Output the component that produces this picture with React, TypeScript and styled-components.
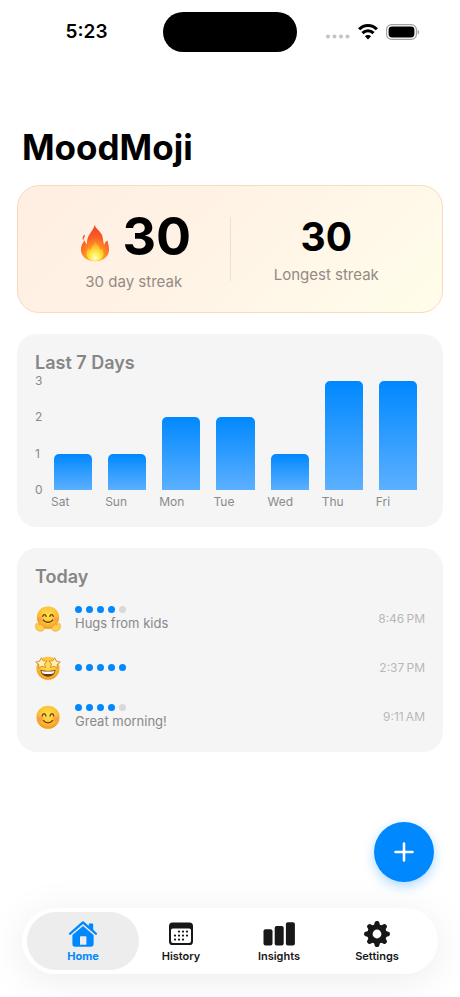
import React from "react";
import styled, { createGlobalStyle } from "styled-components";

const GlobalStyle = createGlobalStyle`
  *, *::before, *::after { box-sizing: border-box; }
  body {
    margin: 0;
    background: #fff;
    color: #000;
    font-family: Inter, "Liberation Sans", sans-serif;
  }
  h1, h2, p, ul { margin: 0; padding: 0; }
  ul { list-style: none; }
`;

const Screen = styled.div`
  min-height: 100vh;
  display: flex;
  flex-direction: column;
  overflow: hidden;
`;

const StatusBar = styled.header`
  display: grid;
  grid-template-columns: 1fr 134px 1fr;
  align-items: center;
  padding-top: 12px;
`;

const Clock = styled.time`
  padding-left: 10px;
  text-align: center;
  font-size: 19px;
  line-height: 24px;
  font-weight: 600;
`;

const Island = styled.div`
  height: 40px;
  border-radius: 20px;
  background: #000;
`;

const StatusIcons = styled.div`
  display: flex;
  align-items: center;
  gap: 8px;
  padding-left: 29px;
`;

const Title = styled.h1`
  padding: 73px 22px 16px;
  font-size: 35px;
  line-height: 44px;
  font-weight: 700;
`;

const Main = styled.main`
  flex: 1;
  display: flex;
  flex-direction: column;
  gap: 21px;
  padding: 0 17px;
`;

const StreakCard = styled.section`
  display: grid;
  grid-template-columns: 1fr 1px 1fr;
  align-items: center;
  min-height: 128px;
  padding: 0 20px;
  border: 1px solid #fbd9bd;
  border-radius: 22px;
  background: linear-gradient(135deg, #ffeee2 0%, #fff3e6 45%, #fffdea 100%);
`;

const Divider = styled.div`
  height: 64px;
  background: #ecdfd3;
`;

const Stat = styled.div`
  display: flex;
  flex-direction: column;
  align-items: center;
  gap: 4px;
`;

const StatValue = styled.div<{ $large?: boolean }>`
  display: flex;
  align-items: flex-end;
  gap: 12px;
  padding-left: ${(p) => (p.$large ? 4 : 0)}px;
  font-size: ${(p) => (p.$large ? 52 : 39)}px;
  line-height: ${(p) => (p.$large ? 62 : 48)}px;
  font-weight: 700;

  svg { margin-bottom: 6px; }
`;

const StatLabel = styled.p`
  font-size: 15px;
  line-height: 20px;
  color: #928a85;
`;

const Card = styled.section`
  padding: 18px 18px 11px;
  border-radius: 20px;
  background: #f5f5f5;
`;

const CardTitle = styled.h2`
  font-size: 18px;
  line-height: 22px;
  font-weight: 600;
  color: #868686;
`;

const Chart = styled.div`
  display: grid;
  grid-template-columns: 11px 1fr;
  margin-top: 7px;
`;

const Axis = styled.div`
  display: flex;
  flex-direction: column;
  justify-content: space-between;
  margin: -7px 0;
  font-size: 12px;
  line-height: 14px;
  color: #8a8a8a;
`;

const Plot = styled.div`
  display: grid;
  grid-template-columns: repeat(7, 1fr);
  align-items: end;
  height: 109px;
`;

const Bar = styled.div`
  margin: 0 8px;
  border-radius: 5px 5px 0 0;
  background: linear-gradient(#0088ff, #5cb0ff);
`;

const DayLabels = styled.div`
  grid-column: 2;
  display: grid;
  grid-template-columns: repeat(7, 1fr);
  padding: 4px 0 6px;
  font-size: 12px;
  line-height: 16px;
  color: #8a8a8a;

  span { padding-left: 5px; }
`;

const Entry = styled.li`
  display: flex;
  align-items: center;
  gap: 14px;
  min-height: 49px;
`;

const EntryList = styled.ul`
  display: flex;
  flex-direction: column;
  margin-top: 6px;
`;

const EntryBody = styled.div`
  flex: 1;
  display: flex;
  flex-direction: column;
  gap: 2px;
`;

const Dots = styled.div`
  display: flex;
  gap: 4px;
`;

const Dot = styled.span<{ $on: boolean }>`
  width: 7px;
  height: 7px;
  border-radius: 50%;
  background: ${(p) => (p.$on ? "#0088ff" : "#d8d8d8")};
`;

const Note = styled.p`
  font-size: 13px;
  line-height: 16px;
  color: #888;
`;

const EntryTime = styled.time`
  font-size: 12px;
  line-height: 16px;
  color: #b8b8b8;
`;

const Footer = styled.footer`
  display: flex;
  flex-direction: column;
  gap: 26px;
  padding: 0 22px 23px;
`;

const AddButton = styled.button`
  align-self: flex-end;
  display: grid;
  place-items: center;
  width: 60px;
  height: 60px;
  margin-right: 4px;
  padding: 0;
  border: 0;
  border-radius: 50%;
  background: #0088ff;
  box-shadow: 0 4px 12px rgba(0, 136, 255, 0.32);
  cursor: pointer;
`;

const TabBar = styled.nav`
  display: grid;
  grid-template-columns: repeat(4, 1fr);
  padding: 4px 12px;
  border-radius: 33px;
  background: #fff;
  box-shadow: 0 6px 40px rgba(0, 0, 0, 0.08);
`;

const Tab = styled.a<{ $active?: boolean }>`
  display: flex;
  flex-direction: column;
  align-items: center;
  gap: 1px;
  height: 58px;
  margin: 0 -7px;
  padding-top: 8px;
  border-radius: 29px;
  background: ${(p) => (p.$active ? "#ededed" : "transparent")};
  color: ${(p) => (p.$active ? "#0088ff" : "#171717")};
  font-size: 11px;
  line-height: 14px;
  font-weight: ${(p) => (p.$active ? 700 : 600)};
  text-decoration: none;
`;

const SignalIcon = () => (
  <svg width="24" height="20" viewBox="0 0 24 20" fill="#c3c3c5" aria-hidden="true">
    <circle cx="2" cy="14.5" r="2" />
    <circle cx="8.5" cy="14.5" r="2" />
    <circle cx="15" cy="14.5" r="2" />
    <circle cx="21.5" cy="14.5" r="2" />
  </svg>
);

const WifiIcon = () => (
  <svg width="20" height="18" viewBox="0 0 20 18" aria-hidden="true">
    <g fill="none" stroke="#000" strokeWidth="3">
      <path d="M1.1 6.3C6 1.1 14 1.1 18.9 6.3" />
      <path d="M4.5 10.1C7.6 6.8 12.4 6.8 15.5 10.1" />
    </g>
    <path d="M10 16.4 6.9 13.2C8.5 11.5 11.5 11.5 13.1 13.2Z" />
  </svg>
);

const BatteryIcon = () => (
  <svg width="34" height="16" viewBox="0 0 34 16" aria-hidden="true">
    <rect x=".6" y=".6" width="29.8" height="14.8" rx="5" fill="none" stroke="#a2a2a4" strokeWidth="1.2" />
    <rect x="2.6" y="2.6" width="25.8" height="10.8" rx="3.4" />
    <path d="M31.6 5.4C33.6 6.2 33.6 9.8 31.6 10.6Z" fill="#a2a2a4" />
  </svg>
);

const FlameIcon = () => (
  <svg width="30" height="38" viewBox="0 0 30 38" aria-hidden="true">
    <defs>
      <radialGradient id="flameOuter" cx=".5" cy=".92" r=".85">
        <stop offset="0" stopColor="#ffd52e" />
        <stop offset=".38" stopColor="#ff9a1f" />
        <stop offset=".72" stopColor="#fb5a27" />
        <stop offset="1" stopColor="#f0492a" />
      </radialGradient>
      <radialGradient id="flameInner" cx=".5" cy=".85" r=".75">
        <stop offset="0" stopColor="#fffbd0" />
        <stop offset=".4" stopColor="#ffec45" />
        <stop offset="1" stopColor="#ff9f22" />
      </radialGradient>
    </defs>
    <path
      fill="url(#flameOuter)"
      d="M14.6 1C14.2 5 9.2 9.5 7.6 14.3C7 16.2 6.9 18.2 6.8 20.3C5.6 19.2 5 17.5 4.8 16.2C2.2 19 1 22.2 1 25.4C1 32.2 6.5 37.2 15 37.2C23.6 37.2 29 32.2 29 25.2C29 21.5 27.8 19.6 27.6 16.5C25.7 17.3 24.6 18.8 24.3 20.8C23 18.4 23.2 15.3 22.4 12.3C21.2 7.5 16.2 5.6 14.6 1Z"
    />
    <path fill="#f5502b" d="M5 10.4C2.3 12 2 14 3.2 16.5C3.3 14 5.2 13 5 10.4Z" />
    <path
      fill="url(#flameInner)"
      d="M15.2 17C14.7 20.5 11.4 22 10.8 26.5C9.9 26 9.3 25.2 9.1 24C7.5 25.6 6.6 27.8 6.6 30C6.6 34 10 36.8 15 36.8C20 36.8 23.5 34 23.5 29.8C23.5 27.6 22.9 26 22.2 24.4C21.4 25 20.8 25.6 20.3 26.5C19.8 22.3 16 20.5 15.2 17Z"
    />
  </svg>
);

const FaceGradient = ({ id }: { id: string }) => (
  <defs>
    <radialGradient id={id} cx=".5" cy=".38" r=".65">
      <stop offset="0" stopColor="#ffe04f" />
      <stop offset=".55" stopColor="#fec535" />
      <stop offset="1" stopColor="#f2921a" />
    </radialGradient>
  </defs>
);

const HugFace = () => (
  <svg width="26" height="26" viewBox="0 0 27 27" role="img" aria-label="Hugging face">
    <FaceGradient id="hugFace" />
    <circle cx="13.5" cy="12.2" r="11.6" fill="url(#hugFace)" />
    <g fill="#f5846b" opacity=".45">
      <circle cx="5.6" cy="13.6" r="2.5" />
      <circle cx="21.4" cy="13.6" r="2.5" />
    </g>
    <g fill="none" stroke="#6e3b0b" strokeWidth="1.4" strokeLinecap="round">
      <path d="M8 10.8C8.6 8.3 11 8.3 11.6 10.8" />
      <path d="M15.4 10.8C16 8.3 18.4 8.3 19 10.8" />
      <path d="M8.6 14.6C10.8 17.6 16.2 17.6 18.4 14.6" />
    </g>
    <g fill="#ffd04a" stroke="#ea9a3c" strokeWidth=".7" strokeLinejoin="round">
      <path d="M1.2 18.5C1.8 17.6 2.6 18 3.2 19L4.6 20.5C5.2 18.2 6.6 18.2 6.8 19.8C8.4 20.6 10 22 9.5 24C8.8 26.4 5 26.6 3 25.4C1.6 24.6 1.4 23.8.9 23C.1 21.9.5 21.3 1.3 21.3C.3 19.9.5 19 1.2 18.5Z" />
      <path d="M25.8 18.5C25.2 17.6 24.4 18 23.8 19L22.4 20.5C21.8 18.2 20.4 18.2 20.2 19.8C18.6 20.6 17 22 17.5 24C18.2 26.4 22 26.6 24 25.4C25.4 24.6 25.6 23.8 26.1 23C26.9 21.9 26.5 21.3 25.7 21.3C26.7 19.9 26.5 19 25.8 18.5Z" />
    </g>
  </svg>
);

const StarFace = () => (
  <svg width="26" height="26" viewBox="0 0 27 27" role="img" aria-label="Star-struck face">
    <FaceGradient id="starFace" />
    <circle cx="13.5" cy="13.8" r="12" fill="url(#starFace)" />
    <path d="M5.7 15.4C9.5 16.9 17.5 16.9 21.3 15.4C21 19.6 18 22.5 13.5 22.5C9 22.5 6 19.6 5.7 15.4Z" fill="#6a3710" />
    <path d="M6.8 16.3C10.5 17.5 16.5 17.5 20.2 16.3C20 18 19.4 18.8 18.8 19.2C15.5 19.9 11.5 19.9 8.2 19.2C7.6 18.8 7 18 6.8 16.3Z" fill="#fff" />
    <g fill="#ffefb0" stroke="#c97a20" strokeWidth=".8" strokeLinejoin="round">
      <path d="M6.6 2.8 8.5 6 12.3 6.2 9.9 9.2 10.9 13 7.2 11.7 3.8 13.7 4 9.8.7 7.4 4.9 6.3Z" />
      <path d="M20.4 2.8 18.5 6 14.7 6.2 17.1 9.2 16.1 13 19.8 11.7 23.2 13.7 23 9.8 26.3 7.4 22.1 6.3Z" />
    </g>
  </svg>
);

const SmileFace = () => (
  <svg width="26" height="26" viewBox="0 0 27 27" role="img" aria-label="Smiling face">
    <FaceGradient id="smileFace" />
    <circle cx="13.5" cy="13.8" r="12" fill="url(#smileFace)" />
    <g fill="#f5796b" opacity=".45">
      <circle cx="5.8" cy="15.4" r="2.8" />
      <circle cx="21.2" cy="15.4" r="2.8" />
    </g>
    <g fill="none" stroke="#6e3b0b" strokeWidth="1.4" strokeLinecap="round">
      <path d="M7.5 12.4C8.2 9.2 10.7 9.2 11.4 12.4" />
      <path d="M15.6 12.4C16.3 9.2 18.8 9.2 19.5 12.4" />
      <path d="M8.8 17.3C11 20.3 16 20.3 18.2 17.3" />
    </g>
  </svg>
);

const PlusIcon = () => (
  <svg width="20" height="20" viewBox="0 0 20 20" stroke="#fff" strokeWidth="2.6" strokeLinecap="round" aria-hidden="true">
    <path d="M10 1.5V18.5M1.5 10H18.5" />
  </svg>
);

const HomeIcon = () => (
  <svg width="30" height="28" viewBox="0 0 30 28" fill="currentColor" aria-hidden="true">
    <path d="M1.2 13.1 13.6 1.9Q15 .8 16.4 1.9L20.8 5.9V4.2Q20.8 3.4 21.6 3.4H24.4Q25.2 3.4 25.2 4.2V9.8L28.8 13.1Q29.5 14 28.8 14.6Q28 15.2 27.2 14.6L15 3.9 2.8 14.6Q2 15.2 1.2 14.6Q.5 14 1.2 13.1Z" />
    <path
      fillRule="evenodd"
      d="M15 5.9 25.6 15.1V24Q25.6 26.8 22.8 26.8H7.2Q4.4 26.8 4.4 24V15.1ZM12 17V24.8H18.4V17Q18.4 16.3 17.7 16.3H12.7Q12 16.3 12 17Z"
    />
  </svg>
);

const CalendarIcon = () => (
  <svg width="26" height="28" viewBox="0 0 26 28" fill="currentColor" aria-hidden="true">
    <path
      fillRule="evenodd"
      d="M4.6 2.5H21.4Q25 2.5 25 6.1V21.4Q25 25 21.4 25H4.6Q1 25 1 21.4V6.1Q1 2.5 4.6 2.5ZM4.8 8.4Q3 8.4 3 10.2V21Q3 23 5 23H21Q23 23 23 21V10.2Q23 8.4 21.2 8.4Z"
    />
    {[
      [11, 11.6], [15, 11.6], [19, 11.6],
      [7, 15.6], [11, 15.6], [15, 15.6], [19, 15.6],
      [7, 19.6], [11, 19.6], [15, 19.6],
    ].map(([x, y]) => (
      <circle key={`${x}-${y}`} cx={x} cy={y} r="1.1" />
    ))}
  </svg>
);

const BarsIcon = () => (
  <svg width="32" height="28" viewBox="0 0 32 28" fill="currentColor" aria-hidden="true">
    <rect x=".5" y="9.3" width="9" height="16.2" rx="2" />
    <rect x="11.7" y="6" width="9" height="19.5" rx="2" />
    <rect x="22.9" y="2.3" width="9" height="23.2" rx="2" />
  </svg>
);

const GearIcon = () => (
  <svg width="28" height="28" viewBox="0 0 28 28" aria-hidden="true">
    <circle cx="14" cy="14" r="7.1" fill="none" stroke="currentColor" strokeWidth="5.4" />
    {[0, 45, 90, 135, 180, 225, 270, 315].map((angle) => (
      <path
        key={angle}
        d="M10.8 6 11.7 2.6Q12.1 1.1 13.4 1.1H14.6Q15.9 1.1 16.3 2.6L17.2 6Z"
        fill="currentColor"
        transform={`rotate(${angle} 14 14)`}
      />
    ))}
  </svg>
);

const days = [
  { label: "Sat", value: 1 },
  { label: "Sun", value: 1 },
  { label: "Mon", value: 2 },
  { label: "Tue", value: 2 },
  { label: "Wed", value: 1 },
  { label: "Thu", value: 3 },
  { label: "Fri", value: 3 },
];

const maxValue = 3;

const entries = [
  { Face: HugFace, score: 4, note: "Hugs from kids", time: "8:46\u2009PM" },
  { Face: StarFace, score: 5, note: "", time: "2:37\u2009PM" },
  { Face: SmileFace, score: 4, note: "Great morning!", time: "9:11\u2009AM" },
];

const tabs = [
  { label: "Home", Icon: HomeIcon },
  { label: "History", Icon: CalendarIcon },
  { label: "Insights", Icon: BarsIcon },
  { label: "Settings", Icon: GearIcon },
];

export default function App() {
  return (
    <Screen>
      <GlobalStyle />
      <StatusBar>
        <Clock>5:23</Clock>
        <Island />
        <StatusIcons>
          <SignalIcon />
          <WifiIcon />
          <BatteryIcon />
        </StatusIcons>
      </StatusBar>
      <Title>MoodMoji</Title>
      <Main>
        <StreakCard>
          <Stat>
            <StatValue $large>
              <FlameIcon />
              30
            </StatValue>
            <StatLabel>30 day streak</StatLabel>
          </Stat>
          <Divider />
          <Stat>
            <StatValue>30</StatValue>
            <StatLabel>Longest streak</StatLabel>
          </Stat>
        </StreakCard>

        <Card>
          <CardTitle>Last 7 Days</CardTitle>
          <Chart>
            <Axis>
              {[3, 2, 1, 0].map((n) => (
                <span key={n}>{n}</span>
              ))}
            </Axis>
            <Plot>
              {days.map((d) => (
                <Bar key={d.label} style={{ height: `${(d.value / maxValue) * 100}%` }} />
              ))}
            </Plot>
            <DayLabels>
              {days.map((d) => (
                <span key={d.label}>{d.label}</span>
              ))}
            </DayLabels>
          </Chart>
        </Card>

        <Card>
          <CardTitle>Today</CardTitle>
          <EntryList>
            {entries.map(({ Face, score, note, time }) => (
              <Entry key={time}>
                <Face />
                <EntryBody>
                  <Dots role="img" aria-label={`${score} out of 5`}>
                    {[1, 2, 3, 4, 5].map((n) => (
                      <Dot key={n} $on={n <= score} />
                    ))}
                  </Dots>
                  {note && <Note>{note}</Note>}
                </EntryBody>
                <EntryTime>{time}</EntryTime>
              </Entry>
            ))}
          </EntryList>
        </Card>
      </Main>
      <Footer>
        <AddButton type="button" aria-label="Add mood">
          <PlusIcon />
        </AddButton>
        <TabBar>
          {tabs.map(({ label, Icon }, i) => (
            <Tab key={label} href={`#${label.toLowerCase()}`} $active={i === 0} aria-current={i === 0 ? "page" : undefined}>
              <Icon />
              {label}
            </Tab>
          ))}
        </TabBar>
      </Footer>
    </Screen>
  );
}
